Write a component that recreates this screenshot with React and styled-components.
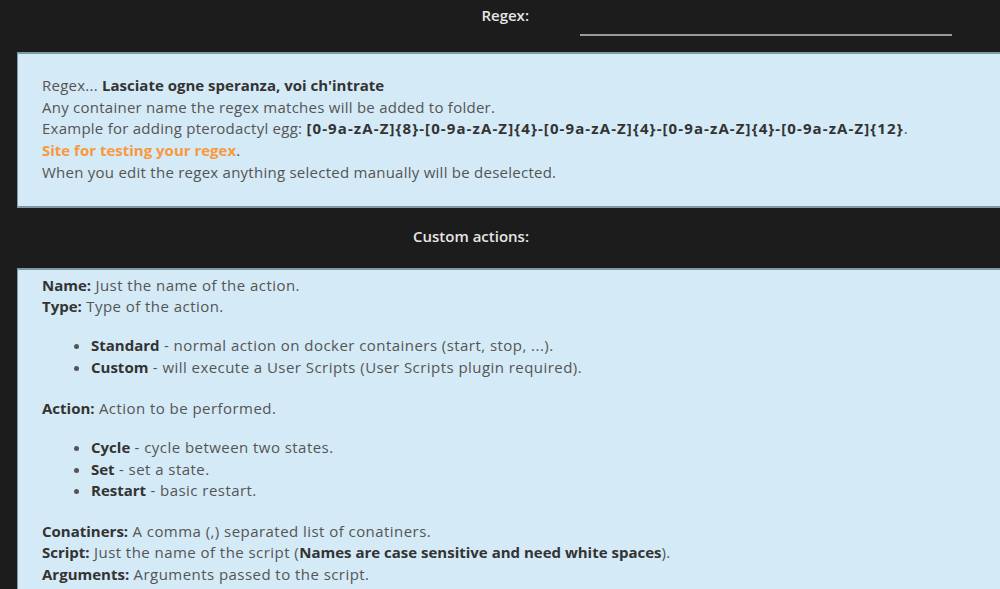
import React from "react";
import styled, { createGlobalStyle } from "styled-components";

const GlobalStyle = createGlobalStyle`
  html, body { margin: 0; padding: 0; background: #1c1c1c; }
  body { font-family: "Open Sans", "Noto Sans", sans-serif; }
`;

const Page = styled.div`
  width: 1000px;
  height: 589px;
  overflow: hidden;
  background: #1c1c1c;
`;

const FieldRow = styled.div`
  display: grid;
  grid-template-columns: 529px 1fr;
  column-gap: 51px;
  height: ${(p) => p.$h}px;
  align-items: start;
`;

const Label = styled.div`
  text-align: right;
  color: #e6e6e6;
  font-size: 15px;
  line-height: 21px;
  font-weight: 600;
  padding-top: ${(p) => p.$pt || 0}px;
`;

const Underline = styled.div`
  width: 372px;
  height: 2px;
  background: #9a9a9a;
  margin-top: 34px;
`;

const Panel = styled.div`
  margin-left: 17px;
  background: #d4eaf6;
  border-top: 2px solid #7f9aa7;
  border-left: 1px solid #7f9aa7;
  border-bottom: 2px solid #7f9aa7;
  padding: ${(p) => p.$pad};
  color: #555;
  font-size: 15px;
  line-height: 21.7px;
  letter-spacing: ${(p) => p.$ls || 0.25}px;
`;

const Line = styled.div``;

const B = styled.b`
  font-weight: 700;
  color: #333;
  letter-spacing: 0;
`;

const Pattern = styled(B)`
  letter-spacing: 1.1px;
`;

const Link = styled.span`
  color: #f8993d;
  font-weight: 700;
  letter-spacing: 0;
`;

const List = styled.ul`
  margin: 17.5px 0 ${(p) => p.$mb || 17.5}px;
  padding-left: 49px;
`;

export default function App() {
  return (
    <Page>
      <GlobalStyle />
      <FieldRow $h={52}>
        <Label $pt={5}>Regex:</Label>
        <Underline />
      </FieldRow>
      <Panel $pad="21px 24px 22px">
        <Line>Regex... <B>Lasciate ogne speranza, voi ch'intrate</B></Line>
        <Line>Any container name the regex matches will be added to folder.</Line>
        <Line>Example for adding pterodactyl egg: <Pattern>[0-9a-zA-Z]{"{8}"}-[0-9a-zA-Z]{"{4}"}-[0-9a-zA-Z]{"{4}"}-[0-9a-zA-Z]{"{4}"}-[0-9a-zA-Z]{"{12}"}</Pattern>.</Line>
        <Line><Link>Site for testing your regex</Link>.</Line>
        <Line>When you edit the regex anything selected manually will be deselected.</Line>
      </Panel>
      <FieldRow $h={60}>
        <Label $pt={18}>Custom actions:</Label>
        <div />
      </FieldRow>
      <Panel $pad="5px 24px 20px" $ls={0.45}>
        <Line><B>Name:</B> Just the name of the action.</Line>
        <Line><B>Type:</B> Type of the action.</Line>
        <List $mb={19}>
          <li><B>Standard</B> - normal action on docker containers (start, stop, ...).</li>
          <li><B>Custom</B> - will execute a User Scripts (User Scripts plugin required).</li>
        </List>
        <Line><B>Action:</B> Action to be performed.</Line>
        <List $mb={18.5}>
          <li><B>Cycle</B> - cycle between two states.</li>
          <li><B>Set</B> - set a state.</li>
          <li><B>Restart</B> - basic restart.</li>
        </List>
        <Line><B>Conatiners:</B> A comma (,) separated list of conatiners.</Line>
        <Line><B>Script:</B> Just the name of the script (<B>Names are case sensitive and need white spaces</B>).</Line>
        <Line><B>Arguments:</B> Arguments passed to the script.</Line>
      </Panel>
    </Page>
  );
}
